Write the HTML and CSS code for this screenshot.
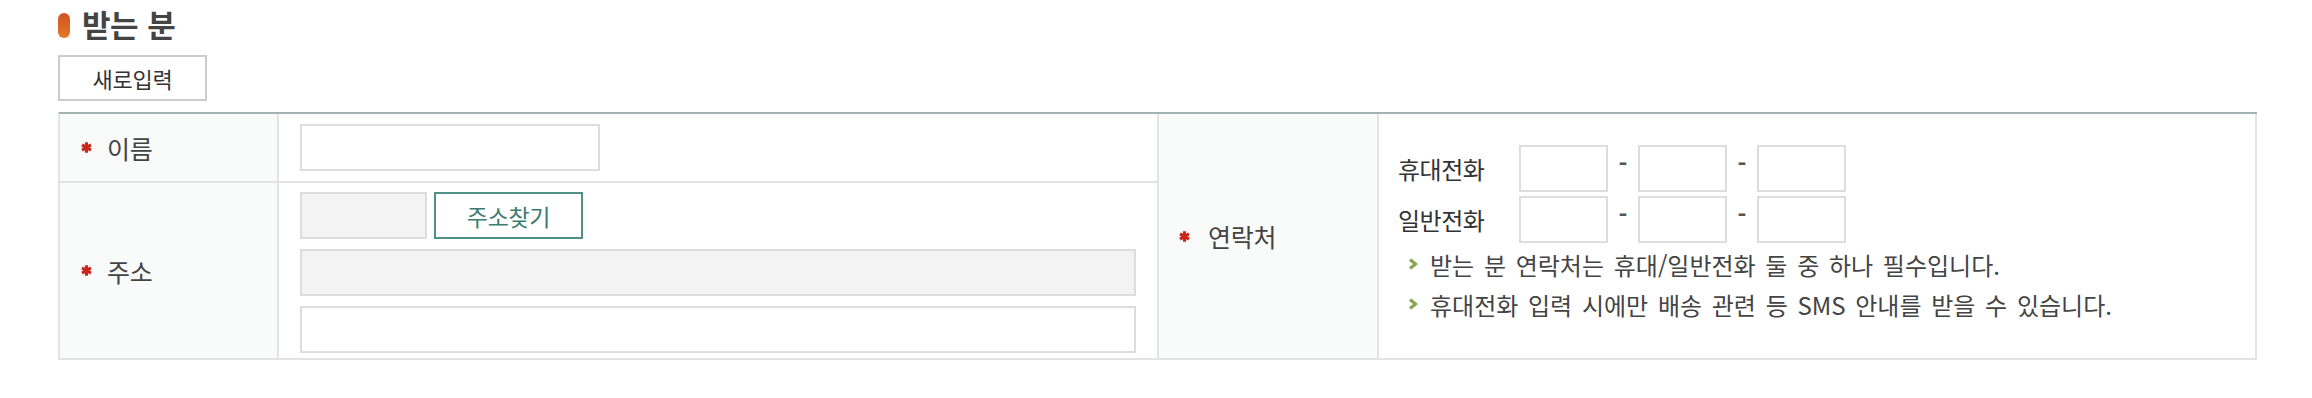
FILE: index.html
```html
<!DOCTYPE html>
<html lang="ko">
<head>
<meta charset="utf-8">
<title>받는 분</title>
<link rel="stylesheet" href="styles.css">
</head>
<body>
<section class="receiver">
  <h2 class="title"><span class="title-bar"></span>받는 분</h2>
  <button type="button" class="btn-new">새로입력</button>
  <div class="form-grid">
    <div class="th th-name"><svg class="req" viewBox="0 0 10 10"><path d="M5 0.3V9.7M0.9 2.65L9.1 7.35M0.9 7.35L9.1 2.65"/></svg><span>이름</span></div>
    <div class="td td-name"><input type="text" class="inp inp-name"></div>
    <div class="th th-contact"><svg class="req" viewBox="0 0 10 10"><path d="M5 0.3V9.7M0.9 2.65L9.1 7.35M0.9 7.35L9.1 2.65"/></svg><span>연락처</span></div>
    <div class="td td-contact">
      <div class="phone-row">
        <span class="phone-label">휴대전화</span>
        <input type="text" class="inp inp-phone">
        <span class="dash">-</span>
        <input type="text" class="inp inp-phone">
        <span class="dash">-</span>
        <input type="text" class="inp inp-phone">
      </div>
      <div class="phone-row">
        <span class="phone-label">일반전화</span>
        <input type="text" class="inp inp-phone">
        <span class="dash">-</span>
        <input type="text" class="inp inp-phone">
        <span class="dash">-</span>
        <input type="text" class="inp inp-phone">
      </div>
      <ul class="notes">
        <li><svg class="arrow" viewBox="0 0 10 12"><path d="M2 1.5L7.5 6L2 10.5"/></svg><span>받는 분 연락처는 휴대/일반전화 둘 중 하나 필수입니다.</span></li>
        <li><svg class="arrow" viewBox="0 0 10 12"><path d="M2 1.5L7.5 6L2 10.5"/></svg><span>휴대전화 입력 시에만 배송 관련 등 SMS 안내를 받을 수 있습니다.</span></li>
      </ul>
    </div>
    <div class="th th-addr"><svg class="req" viewBox="0 0 10 10"><path d="M5 0.3V9.7M0.9 2.65L9.1 7.35M0.9 7.35L9.1 2.65"/></svg><span>주소</span></div>
    <div class="td td-addr">
      <div class="zip-row">
        <input type="text" class="inp inp-zip" readonly>
        <button type="button" class="btn-search">주소찾기</button>
      </div>
      <input type="text" class="inp inp-addr inp-readonly" readonly>
      <input type="text" class="inp inp-addr">
    </div>
  </div>
</section>
</body>
</html>
```

FILE: styles.css
```css
* {
  box-sizing: border-box;
}

html, body {
  margin: 0;
  padding: 0;
  background: #ffffff;
}

body {
  font-family: "Noto Sans CJK KR", "Noto Sans", sans-serif;
  color: #444444;
}

.receiver {
  padding-left: 58px;
  padding-right: 55px;
}

.title {
  margin: 0;
  height: 46px;
  display: flex;
  align-items: center;
  gap: 12px;
  font-size: 31px;
  font-weight: 700;
  color: #444444;
  letter-spacing: -0.5px;
  word-spacing: 1px;
}

.title-bar {
  width: 12px;
  height: 25px;
  border-radius: 6px;
  background: linear-gradient(180deg, #cf5020 0%, #e57a2c 100%);
  margin-top: 4px;
}

.btn-new {
  display: block;
  margin-top: 9px;
  width: 149px;
  height: 46px;
  padding: 0;
  border: 2px solid #cccccc;
  background: #ffffff;
  font-family: inherit;
  font-size: 22px;
  color: #333333;
  letter-spacing: -0.3px;
}

.form-grid {
  margin-top: 11px;
  display: grid;
  grid-template-columns: 219px 880px 220px 878px;
  grid-template-rows: 69px 177px;
  border-top: 2px solid #a3b3b3;
  border-left: 2px solid #e3e3e3;
  width: 2199px;
}

.th,
.td {
  border-right: 2px solid #e3e3e3;
  border-bottom: 2px solid #e3e3e3;
}

.th {
  background: #f9fafa;
  display: flex;
  align-items: center;
  font-size: 25px;
  color: #444444;
  letter-spacing: -0.3px;
}

.th-name {
  grid-row: 1;
  grid-column: 1;
  padding-left: 21px;
}

.th-addr {
  grid-row: 2;
  grid-column: 1;
  padding-left: 21px;
}

.th-contact {
  grid-row: 1 / span 2;
  grid-column: 3;
  padding-left: 20px;
}

.req {
  width: 11px;
  height: 11px;
  margin-right: 15px;
  flex: none;
}

.req path {
  stroke: #c9261b;
  stroke-width: 2.8;
  fill: none;
}

.th-contact .req {
  margin-right: 18px;
}

.td {
  background: #ffffff;
}

.td-name {
  grid-row: 1;
  grid-column: 2;
  padding: 10px 0 0 21px;
}

.td-addr {
  grid-row: 2;
  grid-column: 2;
  padding: 9px 0 0 21px;
  display: flex;
  flex-direction: column;
  gap: 10px;
}

.td-contact {
  grid-row: 1 / span 2;
  grid-column: 4;
  padding: 31px 0 0 19px;
}

.inp {
  display: block;
  height: 47px;
  margin: 0;
  padding: 0 10px;
  border: 2px solid #dddddd;
  background: #ffffff;
  font-family: inherit;
  font-size: 20px;
  color: #333333;
  outline: none;
}

.inp-name {
  width: 300px;
}

.zip-row {
  display: flex;
  gap: 7px;
}

.inp-zip {
  width: 127px;
  background: #f3f3f3;
}

.btn-search {
  width: 149px;
  height: 47px;
  padding: 0;
  border: 2px solid #4f9088;
  background: #ffffff;
  font-family: inherit;
  font-size: 23px;
  color: #3d7b72;
  letter-spacing: -0.3px;
}

.inp-addr {
  width: 836px;
}

.inp-readonly {
  background: #f3f3f3;
}

.phone-row {
  display: flex;
  align-items: center;
  margin-bottom: 4px;
}

.phone-label {
  width: 121px;
  font-size: 24px;
  color: #333333;
  letter-spacing: -0.5px;
}

.inp-phone {
  width: 89px;
}

.dash {
  width: 30px;
  text-align: center;
  font-size: 24px;
  font-weight: 700;
  color: #555555;
  margin-top: -12px;
}

.notes {
  list-style: none;
  margin: -3px 0 0 0;
  padding: 0 0 0 10px;
}

.notes li {
  display: flex;
  align-items: center;
  height: 40px;
  font-size: 24px;
  color: #444444;
  letter-spacing: 0;
  word-spacing: 3px;
}

.arrow {
  width: 10px;
  height: 12px;
  margin-right: 12px;
  flex: none;
}

.arrow path {
  stroke: #8aa552;
  stroke-width: 3.2;
  fill: none;
  stroke-linecap: butt;
  stroke-linejoin: miter;
}
```
